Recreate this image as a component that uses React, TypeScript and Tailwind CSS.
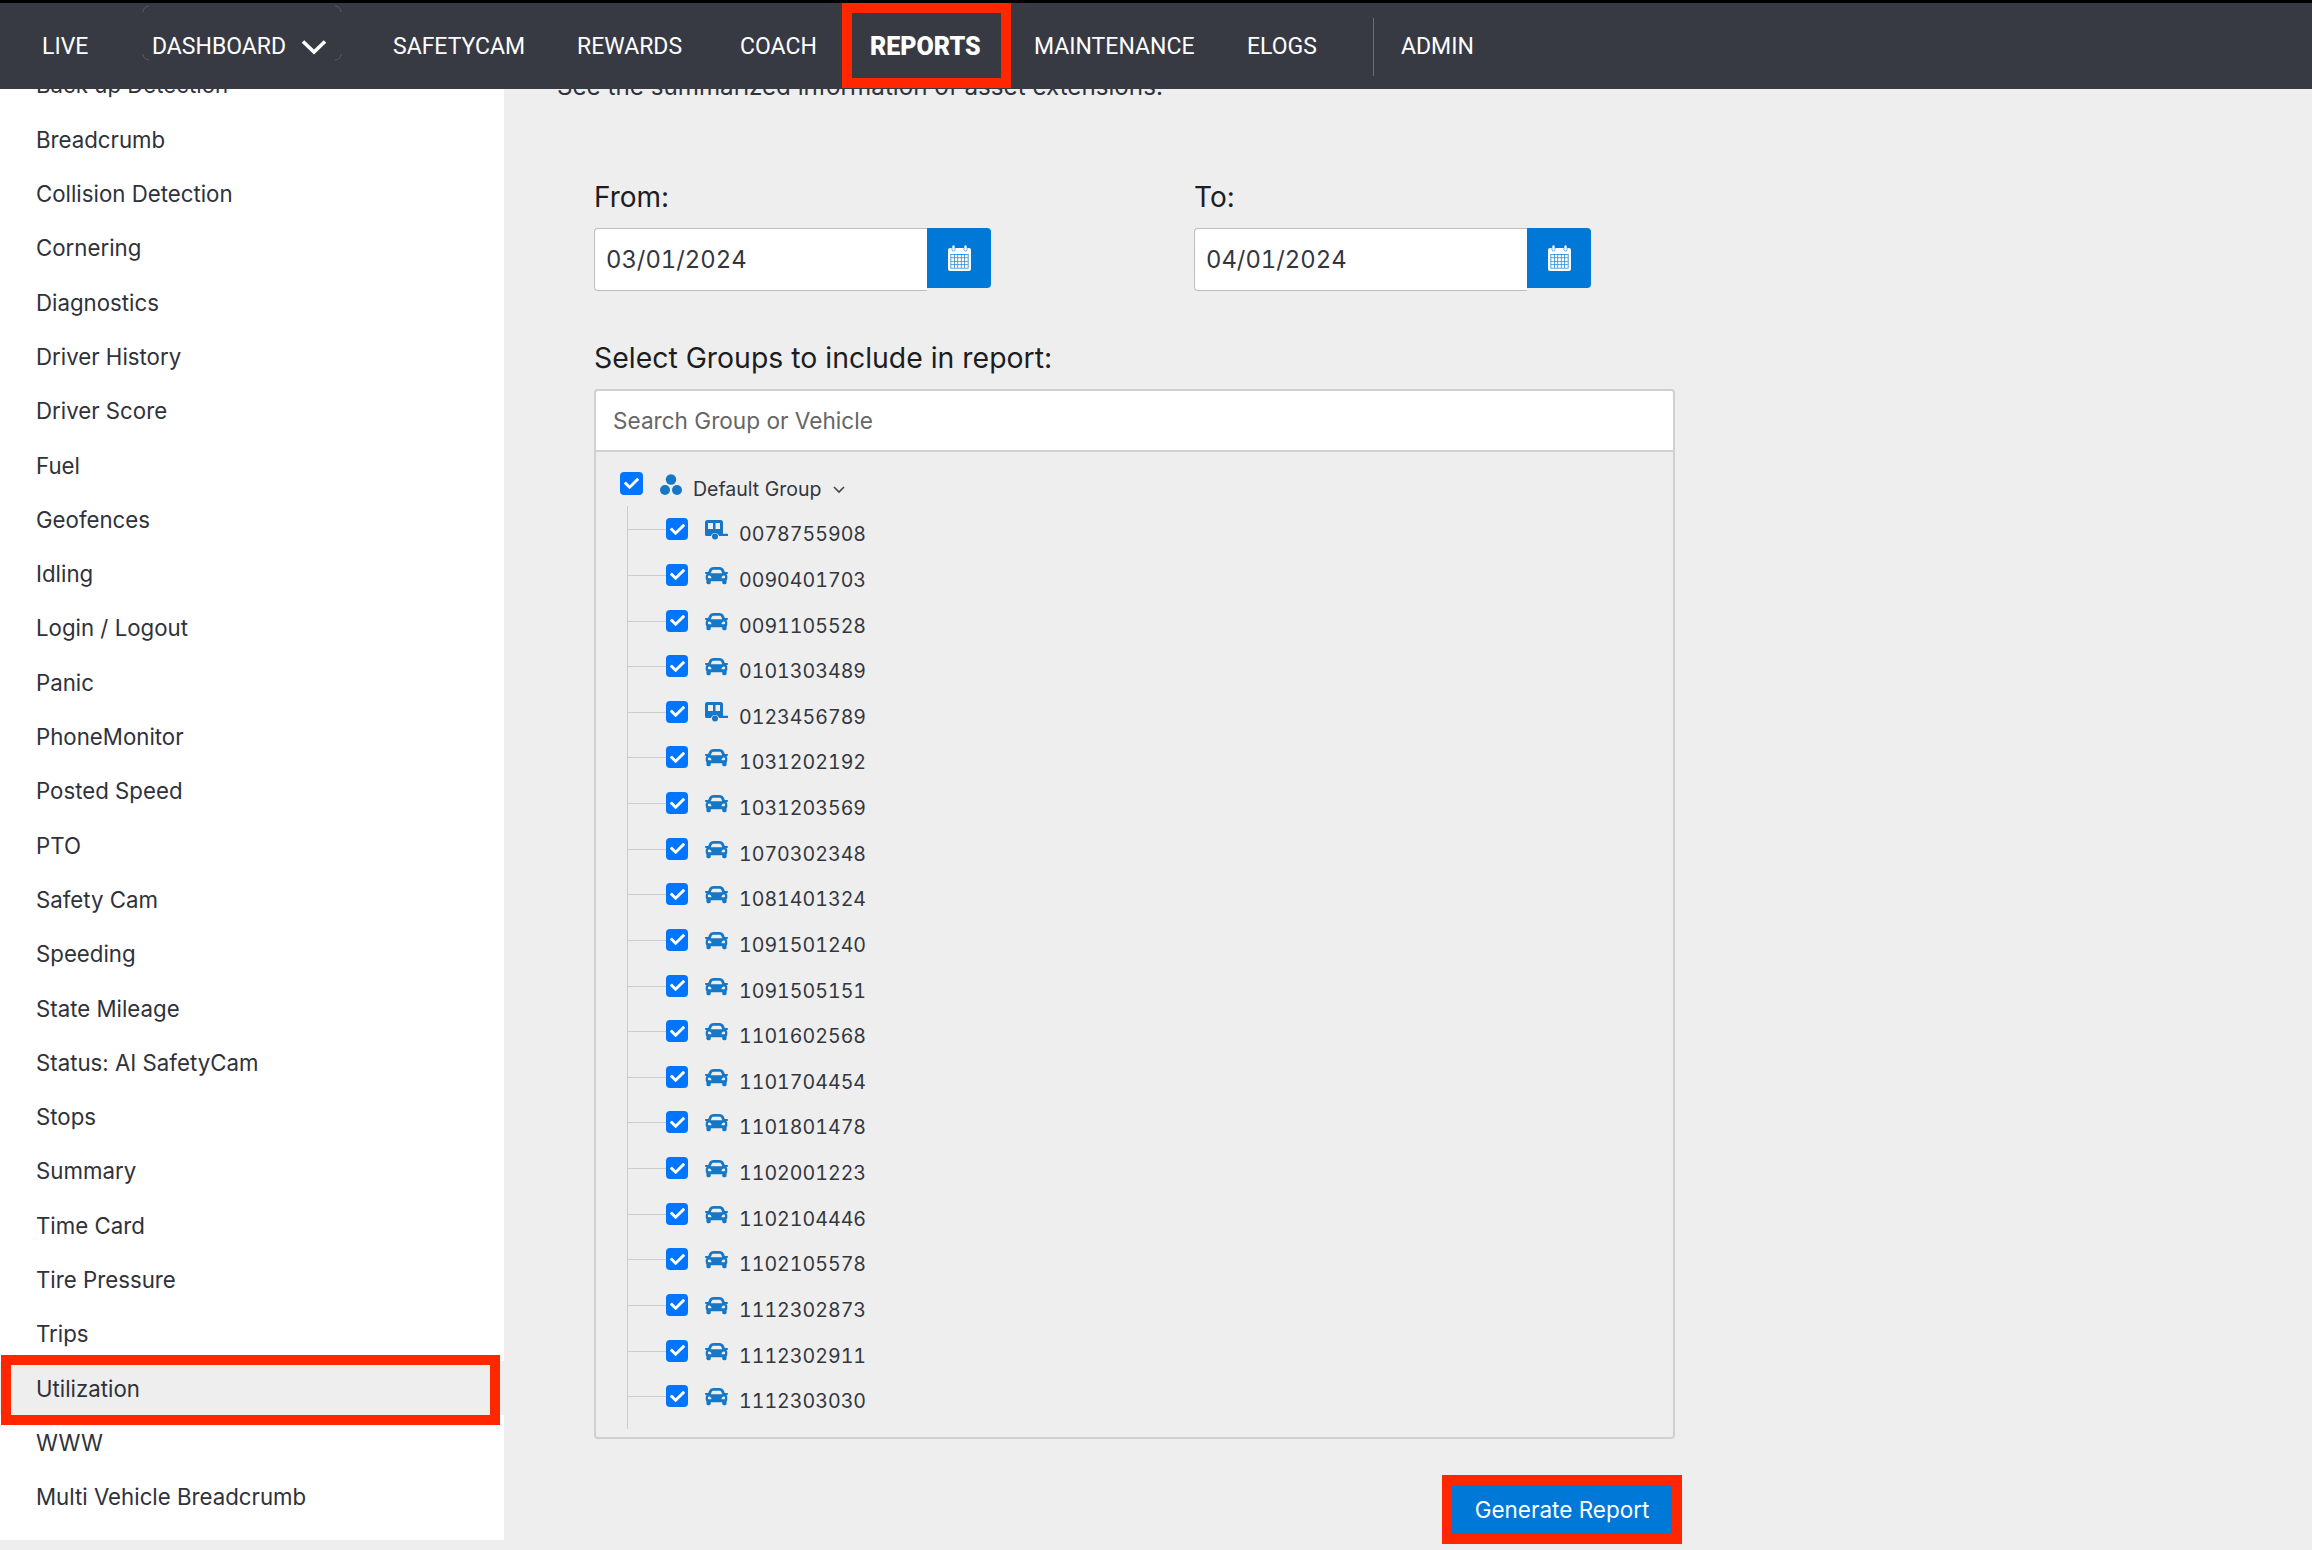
import React from "react";
import { FaCar, FaCheck } from "react-icons/fa";

const NAV: { label: string; w: string; bold?: boolean }[] = [
  { label: "SAFETYCAM", w: "w-[184px]" },
  { label: "REWARDS", w: "w-[163px]" },
  { label: "COACH", w: "w-[130px]" },
];
const NAV2 = [
  { label: "MAINTENANCE", w: "w-[213px]" },
  { label: "ELOGS", w: "w-[126px]" },
];

const SIDE = ["Back up Detection","Breadcrumb","Collision Detection","Cornering","Diagnostics","Driver History","Driver Score","Fuel","Geofences","Idling","Login / Logout","Panic","PhoneMonitor","Posted Speed","PTO","Safety Cam","Speeding","State Mileage","Status: AI SafetyCam","Stops","Summary","Time Card","Tire Pressure","Trips","Utilization","WWW","Multi Vehicle Breadcrumb"];

const TREE: [string, boolean][] = [["0078755908",true],["0090401703",false],["0091105528",false],["0101303489",false],["0123456789",true],["1031202192",false],["1031203569",false],["1070302348",false],["1081401324",false],["1091501240",false],["1091505151",false],["1101602568",false],["1101704454",false],["1101801478",false],["1102001223",false],["1102104446",false],["1102105578",false],["1112302873",false],["1112302911",false],["1112303030",false]];

function Calendar() {
  return (
    <svg width="23" height="26" viewBox="0 0 23 26" fill="none">
      <rect x="0" y="3" width="23" height="23" rx="2" fill="#fff" />
      <rect x="4" y="0" width="3" height="6" rx="1.5" fill="#fff" stroke="#0078d7" strokeWidth="0.6" />
      <rect x="16" y="0" width="3" height="6" rx="1.5" fill="#fff" stroke="#0078d7" strokeWidth="0.6" />
      <rect x="2.5" y="9" width="18" height="14.5" fill="#0078d7" />
      {[0, 1, 2, 3].map((r) =>
        [0, 1, 2, 3, 4].map((c) => (
          <rect key={`${r}-${c}`} x={3.2 + c * 3.45} y={9.7 + r * 3.45} width="2.8" height="2.8" fill="#fff" />
        ))
      )}
    </svg>
  );
}

function Caravan() {
  return (
    <svg width="23" height="20" viewBox="0 0 23 20" fill="#1577c6">
      <path fillRule="evenodd" d="M2.5 0 H15.5 A2.5 2.5 0 0 1 18 2.5 V13.8 H23 V16 H14 A4.2 4.2 0 0 0 6 16 H1.5 A1.5 1.5 0 0 1 0 14.5 V2.5 A2.5 2.5 0 0 1 2.5 0 Z M3 3 V9 H8 V3 Z M10.5 3 V9 H15 V3 Z" />
      <circle cx="10" cy="16.5" r="3" />
    </svg>
  );
}

function Check({ size }: { size: string }) {
  return (
    <span className={`${size} shrink-0 rounded-[4px] bg-[#0075ff] flex items-center justify-center text-white`}>
      <FaCheck size={15} />
    </span>
  );
}

function DateField({ label, value, className }: { label: string; value: string; className: string }) {
  return (
    <div className={className}>
      <div className="h-[30px] leading-[30px] text-[28px] text-[#1d1d1f]">{label}</div>
      <div className="mt-[16px] flex h-[63px] w-[397px]">
        <div className="w-[333px] h-[63px] rounded-l-[4px] border border-[#bdbdbd] border-r-0 bg-white pl-[11px] flex items-center text-[23.8px] tabular-nums text-[#33363d]">{value}</div>
        <div className="w-[64px] h-[60px] rounded-r-[4px] bg-[#0078d7] flex items-center justify-center"><Calendar /></div>
      </div>
    </div>
  );
}

export default function App() {
  return (
    <div className="w-[2312px] h-[1550px] overflow-hidden bg-[#eeeeee] font-['Inter',sans-serif] flex flex-col">
      <nav className="relative z-10 h-[89px] shrink-0 border-t-[3px] border-black bg-[#373a43] text-white text-[23px] pt-[2px] flex items-center font-['Roboto',sans-serif]">
        <div className="w-[110px] pl-[42px]">LIVE</div>
        <div className="relative w-[283px] flex items-center">
          <span className="ml-[42px]">DASHBOARD</span>
          <svg className="ml-[15px]" width="26" height="16" viewBox="0 0 26 16" fill="none"><path d="M2 2.5 L13 13 L24 2.5" stroke="#fff" strokeWidth="3.6" /></svg>
          <svg className="absolute left-[32px] top-[-25px]" width="200" height="56" viewBox="0 0 200 56" fill="none" stroke="#5a5d66" strokeWidth="1">
            <path d="M1 7 A6 6 0 0 1 7 1" /><path d="M193 1 A6 6 0 0 1 199 7" /><path d="M199 49 A6 6 0 0 1 193 55" /><path d="M7 55 A6 6 0 0 1 1 49" />
          </svg>
        </div>
        {NAV.map((n) => <div key={n.label} className={n.w}>{n.label}</div>)}
        <div className="relative w-[164px] font-black text-[25px]">
          REPORTS
          <span className="absolute left-[-28px] top-[-25px] w-[169px] h-[85px] border-[10px] border-[#ff2600]" />
        </div>
        {NAV2.map((n) => <div key={n.label} className={n.w}>{n.label}</div>)}
        <div className="w-px h-[58px] bg-[#6b6e76]" />
        <div className="ml-[27px]">ADMIN</div>
      </nav>

      <div className="flex flex-1 overflow-hidden items-start">
        <aside className="w-[504px] shrink-0 -mt-[31px] bg-white pb-[16px] text-[22.25px] text-[#2f323a]">
          {SIDE.map((s) => s === "Utilization" ? (
            <div key={s} className="relative h-[54.3px] bg-[#eeeeee] pl-[36px] flex items-center">
              {s}
              <span className="absolute left-[1px] top-[-6px] w-[499px] h-[70px] border-[10px] border-[#ff2600]" />
            </div>
          ) : (
            <div key={s} className="h-[54.3px] pl-[36px] flex items-center">{s}</div>
          ))}
        </aside>

        <main className="flex-1 pl-[53px] -mt-[17px]">
          <div className="h-[30px] leading-[30px] text-[24.2px] text-[#2f323a]">See the summarized information of asset extensions.</div>
          <div className="ml-[37px] w-[1081px]">
            <div className="mt-[80px] flex">
              <DateField label="From:" value="03/01/2024" className="w-[600px]" />
              <DateField label="To:" value="04/01/2024" className="w-[397px]" />
            </div>
            <div className="mt-[50px] h-[34px] leading-[34px] text-[28.4px] text-[#1d1d1f]">Select Groups to include in report:</div>
            <section className="mt-[14px] h-[1050px] rounded-[4px] border-2 border-[#d0d0d0]">
              <div className="h-[61px] rounded-t-[3px] border-b-2 border-[#d0d0d0] bg-white pl-[17px] flex items-center text-[22.6px] text-[#666666]">Search Group or Vehicle</div>
              <div className="pl-[24px] pt-[20px]">
                <div className="h-[28px] flex items-start">
                  <Check size="w-[23px] h-[23px]" />
                  <svg className="ml-[17px] mt-[2px]" width="22" height="22" viewBox="0 0 22 22" fill="#1577c6"><circle cx="11" cy="5.5" r="5.2" /><circle cx="5" cy="16" r="5" /><circle cx="17" cy="16" r="5" /></svg>
                  <span className="ml-[11px] mt-[5px] text-[19.5px] leading-[24px] text-[#33363d]">Default Group</span>
                  <svg className="ml-[12px] mt-[14px]" width="12" height="8" viewBox="0 0 12 8" fill="none"><path d="M1 1 L6 6 L11 1" stroke="#444" strokeWidth="1.6" /></svg>
                </div>
                <div className="ml-[7px] mt-[6px] h-[923px] border-l border-[#cccccc] pt-[1px]">
                  {TREE.map(([id, trailer]) => (
                    <div key={id} className="h-[45.63px] flex items-center">
                      <span className="w-[38px] h-px bg-[#cccccc] shrink-0" />
                      <span className="-mt-[1px] flex"><Check size="w-[22px] h-[22px]" /></span>
                      <span className="ml-[17px] w-[23px] flex justify-center text-[#1577c6]">
                        {trailer ? <Caravan /> : <FaCar size={25} />}
                      </span>
                      <span className="ml-[11px] mt-[9px] text-[19.6px] leading-[24px] tabular-nums text-[#33363d]">{id}</span>
                    </div>
                  ))}
                </div>
              </div>
            </section>
            <div className="mt-[36px] -mr-[7px] flex justify-end">
              <button className="w-[240px] h-[69px] border-[10px] border-[#ff2600] bg-[#0078d7] pt-[1px] text-white text-[22.5px] flex items-center justify-center">Generate Report</button>
            </div>
          </div>
        </main>
      </div>
    </div>
  );
}
